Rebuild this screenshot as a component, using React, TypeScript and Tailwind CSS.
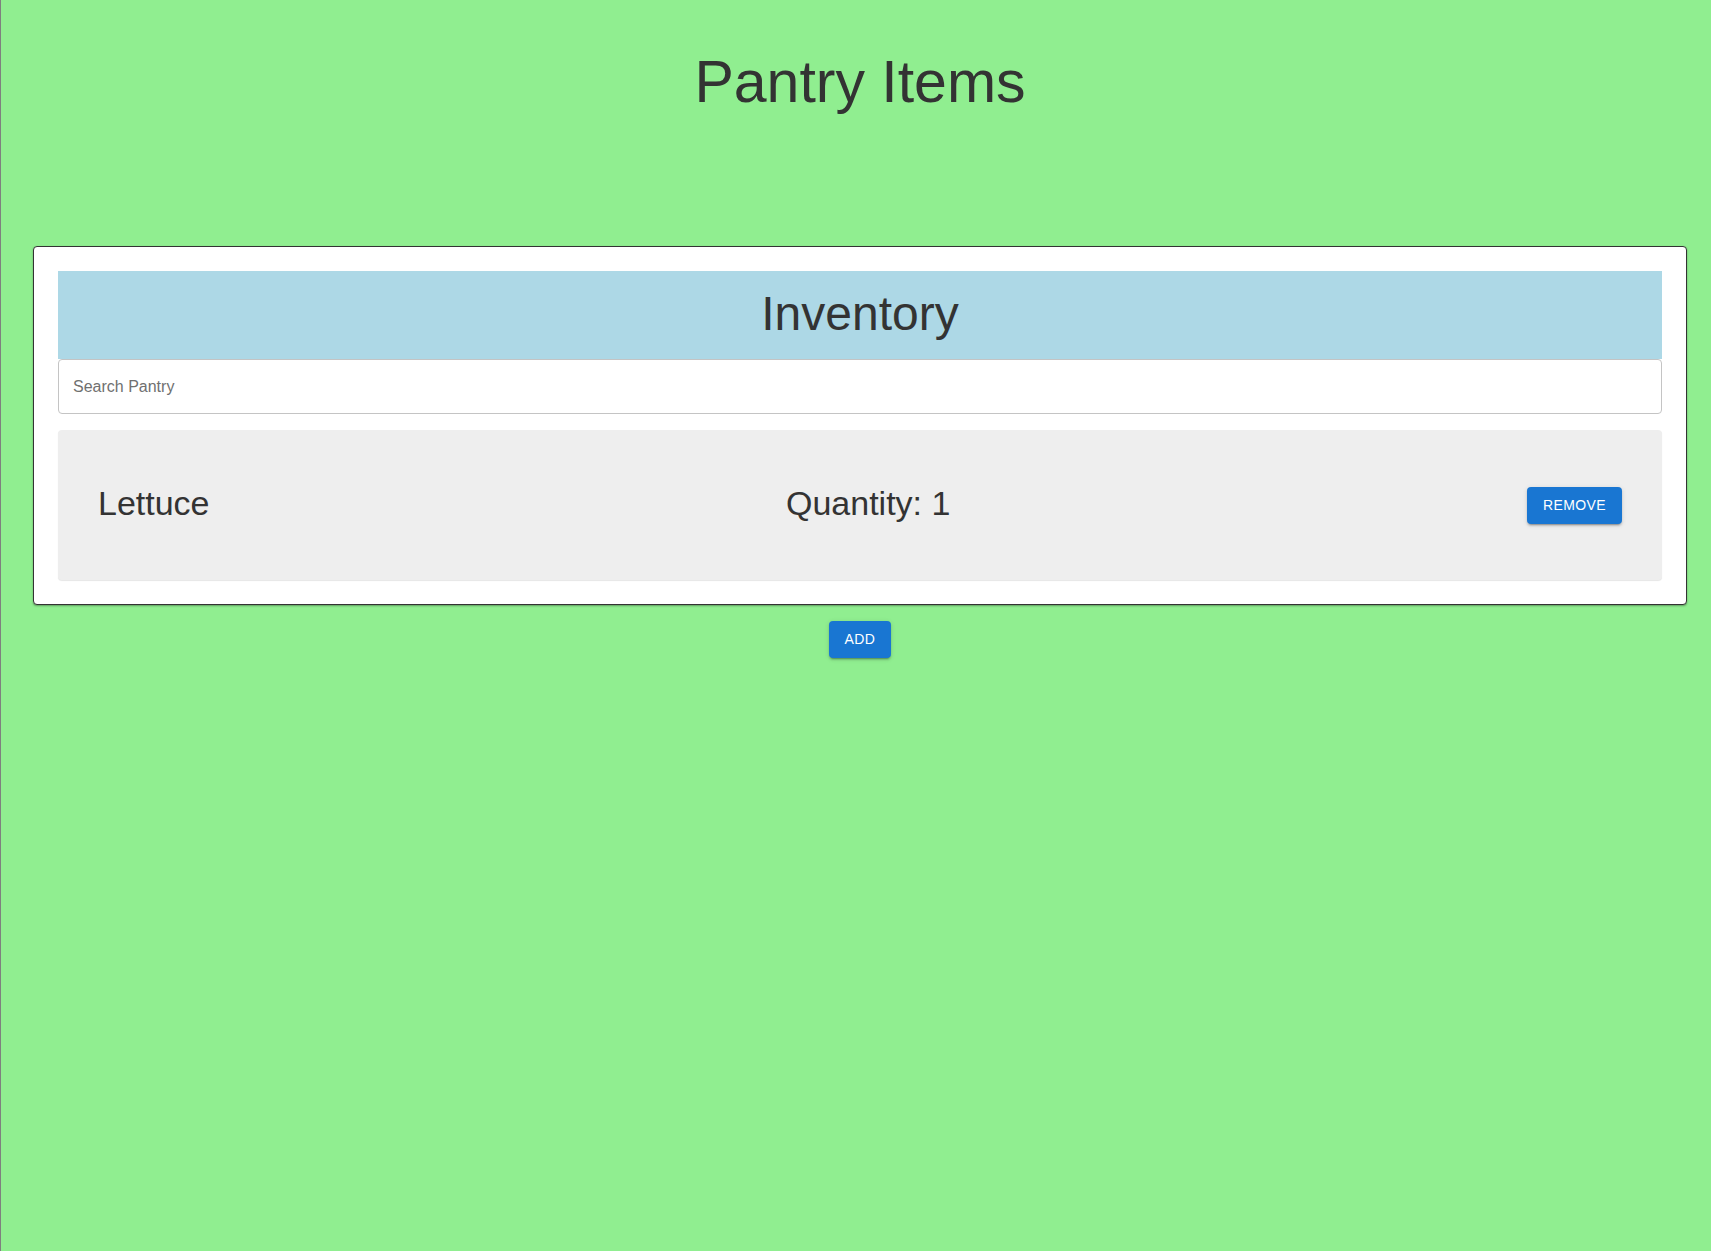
import React from 'react';

const items = [{ name: 'Lettuce', quantity: 1 }];

export default function App() {
  return (
    <div className="min-h-screen bg-[#90ee90] border-l border-[#7f7f7f] font-['Liberation_Sans',Arial,sans-serif] text-[#333333]">
      <div className="flex flex-col items-center pl-[32px] pr-[24px]">
        <h1 className="mt-[46px] text-[59px] leading-[72px] font-normal text-center">Pantry Items</h1>

        {/* Inventory card */}
        <div className="mt-[128px] w-full bg-white border border-[#333333] rounded-[4px] shadow-[0_1px_2px_rgba(0,0,0,0.35)] p-6">
          <div className="h-[88px] bg-[#add8e6] flex items-center justify-center">
            <h2 className="text-[48px] leading-none font-normal mb-[2px]">Inventory</h2>
          </div>
          <input
            type="text"
            placeholder="Search Pantry"
            className="block w-full h-[55px] border border-[#c4c4c4] rounded-[4px] px-[14px] text-[16px] text-[#333333] placeholder:text-[#707070] outline-none bg-white"
          />
          <div className="mt-4 flex flex-col">
            {items.map((item) => (
              <div
                key={item.name}
                className="h-[150px] bg-[#eeeeee] rounded-[4px] shadow-[0_1px_1px_rgba(0,0,0,0.1)] flex items-center justify-between px-10"
              >
                <span className="text-[34px] leading-[40px] mb-[4px]">{item.name}</span>
                <span className="text-[34px] leading-[40px] mb-[4px]">Quantity: {item.quantity}</span>
                <button className="h-[37px] px-4 rounded-[4px] bg-[#1976d2] text-white text-[14px] tracking-[0.4px] uppercase shadow-[0_3px_1px_-2px_rgba(0,0,0,0.2),0_2px_2px_0_rgba(0,0,0,0.14),0_1px_5px_0_rgba(0,0,0,0.12)]">
                  Remove
                </button>
              </div>
            ))}
          </div>
        </div>

        <button className="mt-4 h-[37px] px-4 rounded-[4px] bg-[#1976d2] text-white text-[14px] tracking-[0.4px] uppercase shadow-[0_3px_1px_-2px_rgba(0,0,0,0.2),0_2px_2px_0_rgba(0,0,0,0.14),0_1px_5px_0_rgba(0,0,0,0.12)]">
          Add
        </button>
      </div>
    </div>
  );
}
